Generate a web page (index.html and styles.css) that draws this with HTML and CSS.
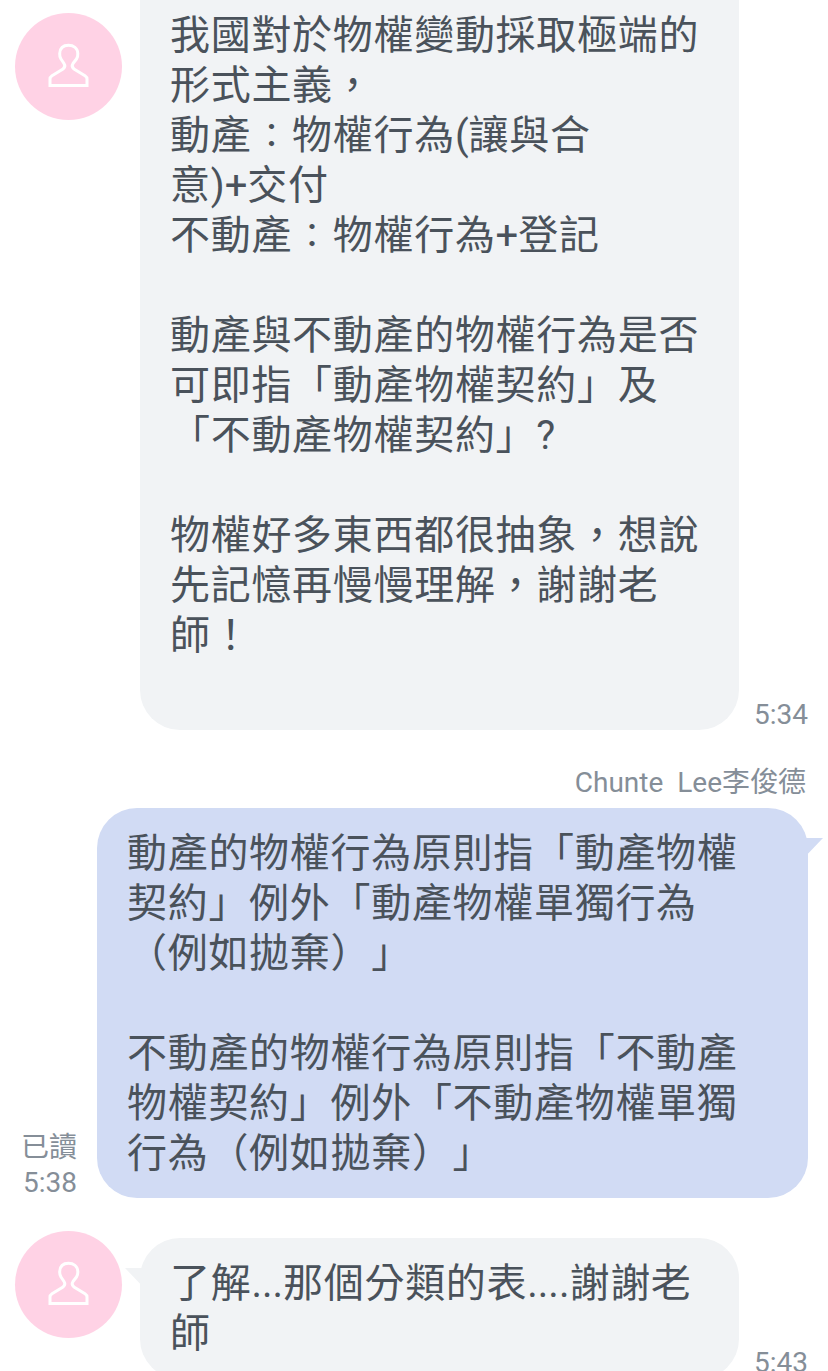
FILE: index.html
```
<!DOCTYPE html>
<html lang="zh-Hant">
<head>
  <meta charset="UTF-8" />
  <meta name="viewport" content="width=device-width, initial-scale=1" />
  <title>Chat</title>
  <link rel="stylesheet" href="styles.css">
</head>
<body>
  <main class="chat">
    <div class="message received first">
      <div class="avatar">
        <svg viewBox="0 0 107 107" fill="none" stroke="#fff" stroke-width="3">
          <path d="M35 72.500V66Q35 64 37 62.700L48 56Q51 53.500 49 50.500L46 46Q44.500 44 44.700 40.500C45 35 48.500 32.300 53.500 32.300S62.500 35 62.800 40.500Q63 44 61.500 46L58 50.500Q56 53.500 59 56L70 62.700Q72 64 72 66V72.500Z" />
        </svg>
      </div>
      <div class="bubble">我國對於物權變動採取極端的<br>形式主義，<br>動產<span class="colon">：</span>物權行為<span class="latin">(</span>讓與合<br>意<span class="latin">)+</span>交付<br>不動產<span class="colon">：</span>物權行為<span class="latin">+</span>登記<br><br>動產與不動產的物權行為是否<br>可即指「動產物權契約」及<br>「不動產物權契約」?<br><br>物權好多東西都很抽象，想說<br>先記憶再慢慢理解，謝謝老<br>師！</div>
      <div class="meta">5:34</div>
    </div>

    <div class="sender">Chunte&nbsp; Lee李俊德</div>

    <div class="message sent">
      <div class="meta"><span class="read">已讀</span><br>5:38</div>
      <div class="bubble">動產的物權行為原則指「動產物權<br>契約」例外「動產物權單獨行為<br>（例如拋棄）」<br><br>不動產的物權行為原則指「不動產<br>物權契約」例外「不動產物權單獨<br>行為（例如拋棄）」</div>
    </div>

    <div class="message received last">
      <div class="avatar">
        <svg viewBox="0 0 107 107" fill="none" stroke="#fff" stroke-width="3">
          <path d="M35 72.500V66Q35 64 37 62.700L48 56Q51 53.500 49 50.500L46 46Q44.500 44 44.700 40.500C45 35 48.500 32.300 53.500 32.300S62.500 35 62.800 40.500Q63 44 61.500 46L58 50.500Q56 53.500 59 56L70 62.700Q72 64 72 66V72.500Z" />
        </svg>
      </div>
      <div class="bubble">了解<span class="latin">...</span>那個分類的表<span class="latin">....</span>謝謝老<br>師</div>
      <div class="meta">5:43</div>
    </div>
  </main>
</body>
</html>
```
FILE: styles.css
```
* { box-sizing: border-box; }
body {
  margin: 0;
  background: #fff;
  font-family: Roboto, "Noto Sans CJK TC", sans-serif;
  color: #4a525b;
}
.chat {
  height: 1371px;
  overflow: hidden;
}
.message { display: flex; }
.received { padding-left: 15px; }
.avatar {
  width: 107px;
  height: 107px;
  border-radius: 50%;
  background: #ffd2e5;
}
.avatar svg { display: block; }
.bubble {
  position: relative;
  border-radius: 40px;
  padding: 21px 30px 19px;
  font-size: 40px;
  line-height: 50px;
  letter-spacing: 0.7px;
  text-spacing-trim: space-all;
  white-space: nowrap;
}
.latin { letter-spacing: 0; }
.colon {
  display: inline-block;
  width: 40.7px;
  height: 50px;
  font-size: 34px;
  text-align: center;
  vertical-align: top;
}
.received .bubble {
  width: 599px;
  margin-left: 18px;
  background: #f1f3f5;
}
.meta, .sender {
  font-size: 28px;
  line-height: 36px;
  color: #858e98;
}
.read {
  position: relative;
  top: 1px;
}
.received .meta {
  align-self: flex-end;
  margin-left: 15px;
  margin-bottom: -3px;
}
.first { height: 730px; }
.first .avatar { margin-top: 13px; }
.first .bubble {
  padding-top: 11px;
  border-radius: 0 0 40px 40px;
}
.sender {
  margin-top: 35px;
  padding-right: 22px;
  text-align: right;
}
.sent {
  justify-content: flex-end;
  height: 390px;
  margin-top: 7px;
  padding-right: 20px;
}
.sent .bubble {
  width: 711px;
  background: #d1dbf4;
}
.sent .meta {
  align-self: flex-end;
  margin-right: 20px;
  margin-bottom: -3px;
  text-align: right;
}
.last {
  height: 141px;
  margin-top: 40px;
}
.last .avatar { margin-top: -7px; }
.last .meta { margin-bottom: -2px; }

/* bubble tails */
.sent .bubble::after,
.last .bubble::before {
  content: "";
  position: absolute;
  top: 30px;
  width: 17px;
  height: 16px;
}
.sent .bubble::after {
  right: -15px;
  background: #d1dbf4;
  clip-path: polygon(0 0, 100% 0, 10% 100%, 0 100%);
}
.last .bubble::before {
  left: -15px;
  background: #f1f3f5;
  clip-path: polygon(0 0, 100% 0, 100% 100%, 90% 100%);
}
```
